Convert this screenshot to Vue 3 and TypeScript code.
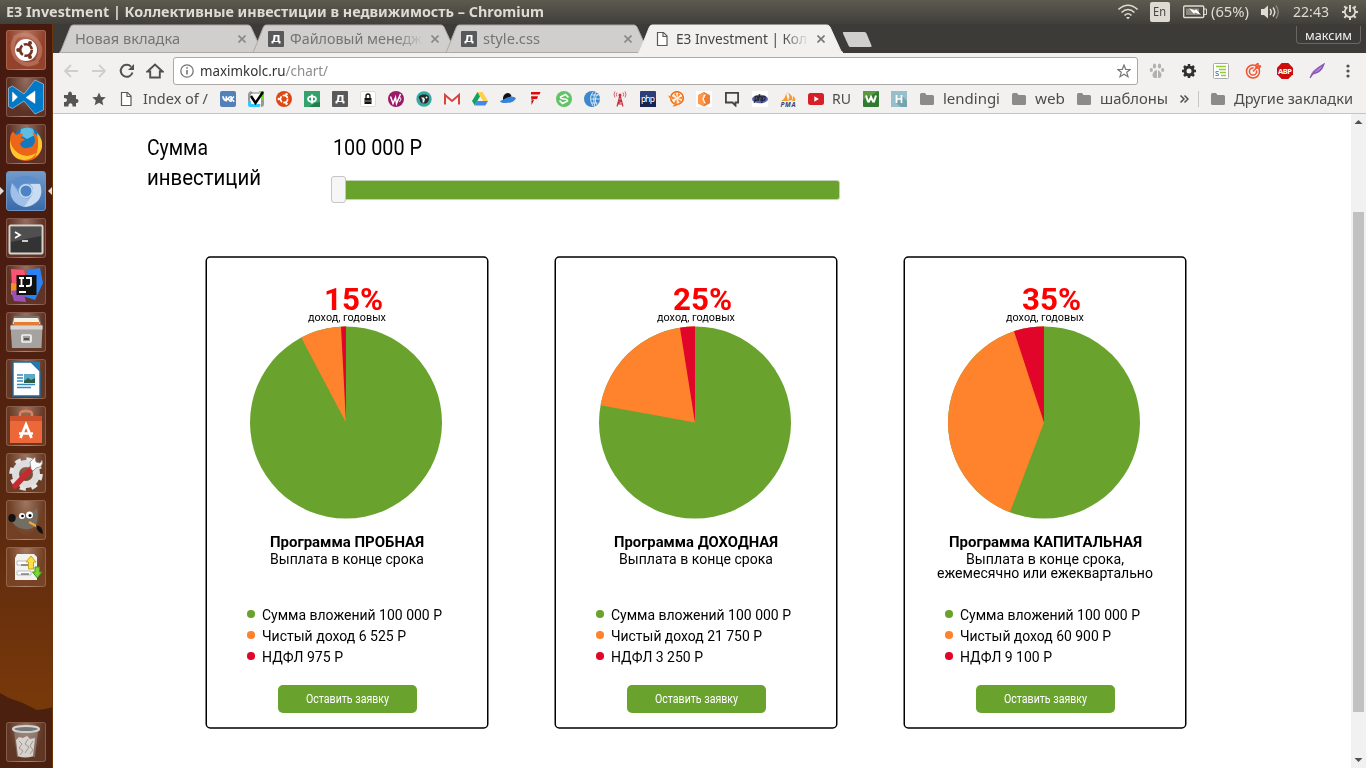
<script setup lang="ts">
import type { Directive } from 'vue'

// Scales a line of text horizontally so that it takes the given width.
const vFit: Directive<HTMLElement, number> = {
  mounted(el, { value }) {
    const natural = el.getBoundingClientRect().width
    el.style.transform = `scaleX(${value / natural})`
    el.style.marginRight = `${value - natural}px`
  },
}

interface Row { color: string; text: string; width: number }
interface Program {
  rate: string
  name: string
  nameWidth: number
  terms: { text: string; width: number }[]
  orange: number
  red: number
  rows: Row[]
}

const GREEN = '#69a22d'
const ORANGE = '#ff822c'
const RED = '#e1052a'

const programs: Program[] = [
  {
    rate: '15%', name: 'Программа ПРОБНАЯ', nameWidth: 154,
    terms: [{ text: 'Выплата в конце срока', width: 154 }],
    orange: 27.8, red: 3,
    rows: [
      { color: GREEN, text: 'Сумма вложений 100 000 Р', width: 180 },
      { color: ORANGE, text: 'Чистый доход 6 525 Р', width: 144 },
      { color: RED, text: 'НДФЛ 975 Р', width: 81 },
    ],
  },
  {
    rate: '25%', name: 'Программа ДОХОДНАЯ', nameWidth: 164,
    terms: [{ text: 'Выплата в конце срока', width: 154 }],
    orange: 79.6, red: 9,
    rows: [
      { color: GREEN, text: 'Сумма вложений 100 000 Р', width: 180 },
      { color: ORANGE, text: 'Чистый доход 21 750 Р', width: 151 },
      { color: RED, text: 'НДФЛ 3 250 Р', width: 92 },
    ],
  },
  {
    rate: '35%', name: 'Программа КАПИТАЛЬНАЯ', nameWidth: 193,
    terms: [{ text: 'Выплата в конце срока,', width: 158 }, { text: 'ежемесячно или ежеквартально', width: 216 }],
    orange: 159.2, red: 18.2,
    rows: [
      { color: GREEN, text: 'Сумма вложений 100 000 Р', width: 180 },
      { color: ORANGE, text: 'Чистый доход 60 900 Р', width: 151 },
      { color: RED, text: 'НДФЛ 9 100 Р', width: 92 },
    ],
  },
]

// Slice that starts at the given angle (counter-clockwise from the top) and ends at the top.
function slice(deg: number): string {
  const a = (deg * Math.PI) / 180
  const x = 96 - 96 * Math.sin(a)
  const y = 96 - 96 * Math.cos(a)
  return `M96 96L${x.toFixed(2)} ${y.toFixed(2)}A96 96 0 0 1 96 0Z`
}

const page = '<path d="M3.5 1.5h6l3.5 3.5v9.5h-9.500z" fill="#fff" stroke="#5a5a5a" stroke-width="1.2"/><path d="M9 1.500v4h4" fill="none" stroke="#5a5a5a" stroke-width="1.2"/>'
const letterD = '<rect width="16" height="16" rx="1" fill="#58595b"/><path d="M5.500 4h6v6h1v2.500h-2V11h-5v1.500h-2V10h1q1-2 1-6zm2 1.500q0 3-.8 4.500h2.800V5.500z" fill="#fff"/>'

const tabs = [
  { icon: '', text: 'Новая вкладка', width: 105, active: false, fade: false },
  { icon: letterD, text: 'Файловый менедж', width: 132, active: false, fade: true },
  { icon: letterD, text: 'style.css', width: 57, active: false, fade: false },
  { icon: page, text: 'E3 Investment | Кол', width: 131, active: true, fade: true },
]

const bookmarkIcons: string[] = [
  '<rect width="16" height="16" rx="2" fill="#5181b8"/><path d="M2 5.200h1.800Q4.300 7.500 5.500 8.200V5.200H7.200V7.200Q8.300 6.800 9 5.200h1.600Q10 7 9 7.800q1.300.8 2 2.700H9.200Q8.600 9 7.200 8.700v1.800Q3 10.800 2 5.200z" fill="#fff"/><path d="M11 5v6M14 5.500L11.500 8l2.700 2.700" fill="none" stroke="#fff" stroke-width="1.500"/>',
  '<path d="M4 1H11V4H4z" fill="#bbb"/><path d="M0 4q0-3 3-4l2 2-3 3v6H0z" fill="#999"/><path d="M11 0h5v9h-3z" fill="#62e523"/><path d="M0 10h3l4 3h5v3H2q-2 0-2-2z" fill="#35c7ff"/><path d="M12 9h4v4q0 3-3 3z" fill="#999"/><rect x="3" y="3" width="10" height="10" fill="#fff"/><path d="M3 5l4.500 7L15 1" fill="none" stroke="#000" stroke-width="2.400"/>',
  '<circle cx="8" cy="8" r="8" fill="#dd4814"/><circle cx="8" cy="8" r="3.600" fill="none" stroke="#fff" stroke-width="1.700" stroke-dasharray="6.300 1.240"/><g fill="#fff"><circle cx="2.800" cy="8" r="1.200"/><circle cx="10.500" cy="3.300" r="1.200"/><circle cx="10.500" cy="12.700" r="1.200"/></g>',
  '<rect width="16" height="16" fill="#34a36b"/><path d="M11 12l5-1v5H5z" fill="#227d4e"/><ellipse cx="8" cy="8" rx="4" ry="2.700" fill="none" stroke="#fff" stroke-width="1.800"/><path d="M8 3.500v9" stroke="#fff" stroke-width="2"/>',
  letterD,
  '<rect x=".5" y=".5" width="15" height="15" rx="1.500" fill="#fff" stroke="#ddd"/><rect x="4.500" y="7" width="7" height="6" fill="#111"/><path d="M6 7V5q0-2 2-2t2 2v2" fill="none" stroke="#111" stroke-width="1.300"/><path d="M5 10h6" stroke="#999"/>',
  '<circle cx="8" cy="8" r="8" fill="#991b68"/><path d="M2.500 5.500L5 12.500 7.500 6.500 8.500 12.500 12.500 3" fill="none" stroke="#fff" stroke-width="1.500"/><path d="M11 7q2-1 2 1l-1.500 3" fill="none" stroke="#fff"/>',
  '<circle cx="8" cy="8" r="7.700" fill="#35aaa5"/><path d="M2.500 6Q4 3 8 3.500 13 3 13 7t-3 5.500Q4 13 4 9z" fill="#282828"/><path d="M5 6.500h3l1 2-1 3H6.500V8.500z" fill="#e8f3f3"/><circle cx="10.500" cy="6.500" r="1" fill="#fff"/>',
  '<rect y="2.500" width="16" height="11" rx="1" fill="#f5f5f5"/><path d="M1 13.500V4l7 6 7-6v9.500" fill="none" stroke="#d9453c" stroke-width="2"/>',
  '<path d="M5.500 1h5l5.500 9h-5z" fill="#ffcf48"/><path d="M5.500 1L8 5.500 2.700 14.500 0 10z" fill="#13a160"/><path d="M5.300 10H16l-2.700 4.500H2.700z" fill="#4589e8"/>',
  '<path d="M3 6.500q1-4 4.500-4.500 3 0 4 3l-3 4H3z" fill="#111"/><path d="M0 10q3-1 6-3 6-3 10 0-2 5-10 5-5 .5-6-2z" fill="#3983d7"/>',
  '<path d="M3 1h9.500l-1 2.600H3zM3 5.300h7L9 8H6.500l-3 1z" fill="#d80b0b"/><path d="M3.500 9.500L6 9l-2.500 5z" fill="#a70000"/>',
  '<circle cx="8" cy="8" r="8" fill="#5fc465"/><path d="M12.500 6.500L9.500 3.500 4.500 6Q4.500 8 8 8t3.500 2L6.500 12.500l-3-3" fill="none" stroke="#fff" stroke-width="1.600"/>',
  '<circle cx="8" cy="8" r="8" fill="#3d88ca"/><path d="M9 1q-5 6 0 14M14 3Q9 8 13 14M7.500 4h7M7 8h9M7.500 12h6M12 1q-4 6-1 15" fill="none" stroke="#e8f2fa" stroke-width=".9"/>',
  '<path d="M8 4L5 15.500M8 4l3 11.500M6.500 10h3M5.500 13h5M6.500 8l3 2-4 3" fill="none" stroke="#c82c3b" stroke-width="1.100"/><circle cx="8" cy="4" r="1.500" fill="#c82c3b"/><path d="M5 1.500Q3.500 3.500 5 5.500M11 1.500q1.500 2 0 4M3 .5Q1 3.500 3 6.500M13 .5q2 3 0 6" fill="none" stroke="#d4606b"/>',
  '<rect width="16" height="16" rx="1" fill="#2b3f7a"/><path d="M0 9Q8 6 16 8v8H0z" fill="#162451"/><text x="8" y="11" text-anchor="middle" textLength="14" font-size="8.500" fill="#fff">php</text>',
  '<circle cx="9" cy="7" r="6.300" fill="#fff5ec" stroke="#f26b10" stroke-width="1.500"/><path d="M9 7L6 3l2-1zM9.500 6.500l.5-4.500 2.500 1.500zM10 7.300l4.500-2v3zM9.500 8l4 2-2 2zM8.500 8l.5 4.500-3-1zM8 7l-4-1.500v3z" fill="#f7852f"/><path d="M0 4.500l4.500 1-2 3z M4.500 15.500l2.500-3.500 2.500 3z" fill="#f7852f"/>',
  '<rect width="16" height="16" fill="#fff"/><path d="M8 1l6 3.200v8L8 15.500l-6-3.300v-8z" fill="#f17b2e"/><path d="M8 1v14.500l-6-3.300v-8z" fill="#ff974a"/><path d="M9.500 4Q8 4 8 6L7 8l1 2q0 2 1.500 2" fill="none" stroke="#fff" stroke-width="1.300"/>',
  '<path d="M1.900 1.900h12.200v9.600h-2.600v3L8.500 11.500H1.900z" fill="none" stroke="#444" stroke-width="1.800"/>',
  '<rect width="16" height="16" fill="#fff"/><ellipse cx="8" cy="8" rx="8" ry="4.300" fill="#5b67a7"/><text x="8" y="10.300" text-anchor="middle" textLength="12" font-size="8" font-weight="bold" font-style="italic" fill="#1c1f37">php</text>',
  '<path d="M1 10Q6 7 6 2l2 8zM8 10Q11 4 7 1q7 4 5 8zM12 10q2-3 1-5 3 2 2 5z" fill="#f69b2d"/><text x="8" y="15.500" text-anchor="middle" textLength="15" font-size="6.500" font-weight="bold" font-style="italic" fill="#344278">PMA</text>',
  '<rect y="2" width="16" height="12" rx="2.500" fill="#d61f26"/><path d="M6.300 5.300v5.400L10.800 8z" fill="#fff"/>',
]
const wIcon = '<rect width="16" height="16" rx="1" fill="#307b30"/><path d="M0 0h16L0 9z" fill="#5c983f"/><path d="M3 4.500l2 6h1L8 6l2 4.500h1l2-6" fill="none" stroke="#fff" stroke-width="2"/>'
const hIcon = '<rect width="16" height="16" fill="#96bfcc"/><path d="M11 5l5 5v6H10l-5-4z" fill="#76a1ae"/><path d="M5.500 4v8M10.500 4v8M5.500 8h5" stroke="#fff" stroke-width="1.700"/>'
const folders = [
  { text: 'lendingi', width: 57 },
  { text: 'web', width: 30 },
  { text: 'шаблоны', width: 68 },
]

const extensions: string[] = [
  '<g fill="#b2b2b2"><ellipse cx="5.500" cy="3" rx="1.700" ry="2.500"/><ellipse cx="10.500" cy="3" rx="1.700" ry="2.500"/><ellipse cx="2.300" cy="7" rx="1.600" ry="2.100"/><ellipse cx="13.700" cy="7" rx="1.600" ry="2.100"/><path d="M8 7q3 0 4.500 4.500 0 3.500-2.500 3.500H6Q3.500 15 3.500 11.500 5 7 8 7z"/></g><path d="M8.500 7v8" stroke="#f2f1f0"/>',
  '<circle cx="8" cy="8" r="4" fill="none" stroke="#303030" stroke-width="3"/><path d="M8 1v3M8 12v3M1 8h3M12 8h3M3 3l2 2M11 11l2 2M3 13l2-2M11 5l2-2" stroke="#303030" stroke-width="2.500"/>',
  '<rect x=".5" y=".5" width="15" height="15" rx="1" fill="#fff" stroke="#aaa"/><path d="M3 3.500h10M6 6.500h7M7 9.500h6M8 12.500h5" stroke="#94c83d" stroke-width="1.400"/><text x="2" y="12.500" font-size="7.500" fill="#444">S</text>',
  '<g fill="none" stroke="#f2512d"><circle cx="8" cy="8.500" r="6.500" stroke-width="1.500"/><circle cx="8" cy="8.500" r="3.600" stroke-width="1.500"/><path d="M8 8.500L14 2" stroke="#f2f1f0" stroke-width="3.500"/><path d="M8 8.500L14 2M11 5V2l2-2v3h3l-2 2z" stroke-width="1.400"/></g>',
  '<path d="M4.700 0h6.600L16 4.700v6.600L11.300 16H4.700L0 11.300V4.700z" fill="#cb0d0d"/><text x="8" y="10.800" text-anchor="middle" textLength="14" font-size="7.500" font-weight="bold" fill="#fff">ABP</text>',
  '<path d="M1 15Q1 7 15 1q-1 8-8 9.500-3 .5-6 4.500z" fill="#b48ad7"/><path d="M1 15Q5 7 15 1 12 9 5 10.500" fill="none" stroke="#8453ae" stroke-width="1.200"/>',
]

const launcher: { tint: string; art: string }[] = [
  { tint: 'dash', art: '<path d="M8 8q12-8 22 2 8 10 1 20M32 31q-12 8-22-3-7-12 0-21" fill="none" stroke="#d69a86" stroke-width="4" opacity=".45"/><circle cx="20" cy="20" r="11" fill="#fff"/><circle cx="20" cy="20" r="5.800" fill="none" stroke="#713420" stroke-width="2.600" stroke-dasharray="10.500 1.650"/><g fill="#713420"><circle cx="12.200" cy="20" r="2"/><circle cx="24" cy="13" r="2"/><circle cx="24" cy="27" r="2"/></g>' },
  { tint: 'plain', art: '<path d="M2.500 11l4-2L18 17 29 3l8.500 4v26L29 37 18 24 6.500 31.500l-4-2zM6.500 15v10l5-5zM29 14l-9 6.500 9 6z" fill="#0079c8" fill-rule="evenodd" stroke="#b8c8d8" stroke-width=".7"/><path d="M6.500 15v10l5-5zM29 14l-9 6.500 9 6z" fill="#fff"/>' },
  { tint: 'plain', art: '<circle cx="21" cy="18" r="14.500" fill="#1577bb"/><path d="M15 5q7-3 12 0l2 6-8 4-7-4z" fill="#5fbde2"/><path d="M4 16Q4 10 7 7.500L10 11q4-2 7-1l-2 4q3 0 4 2-4 1-5 4 2 5 7 4 8-1 8-8-1-6-3-8 10 5 10 14-2 14-16 15Q4 36 4 20z" fill="#ed6519"/><path d="M4 16q1 8 8 13 9 6 18 0-3 7-12 7Q5 35 4 21zM31 9q6 6 5 14-1 6-7 10 5-9 2-24z" fill="#ffc52d"/>' },
  { tint: 'chromium', art: '<circle cx="20" cy="20" r="15.500" fill="#76a4d6"/><path d="M20 4.500q10 0 14 8H20q-6 0-8 6l-6-7q5-7 14-7z" fill="#5b8dca"/><path d="M6 12l8 12q5 6 11 2l-7 10Q4 32 4.500 19z" fill="#9fc0e8"/><path d="M34 13q4 13-5 19-5 4-11 4l8-12q3-6-2-11z" fill="#c9dcf1"/><circle cx="20" cy="20" r="7" fill="#c9dcf1"/><circle cx="20" cy="20" r="5.500" fill="#4c83c4"/>' },
  { tint: 'plain', art: '<rect x="3.500" y="7.500" width="33" height="28" rx="1" fill="#333" stroke="#d5d5d0" stroke-width="2"/><path d="M5 9h30v9L5 24z" fill="#666" opacity=".55"/><path d="M9 14l5 3-5 3M16 23h6" fill="none" stroke="#fff" stroke-width="1.700"/>' },
  { tint: 'plain', art: '<path d="M5 4l13 1 3 12-15 4z" fill="#fc5375"/><path d="M5 18l10 1-1 16-9-6z" fill="#f38d28"/><path d="M22 5l12-2 3 15-8 17-12-4z" fill="#2a82f5"/><path d="M5 26l12-2 3 13-12-1z" fill="#9b52b5"/><rect x="10.500" y="10" width="20" height="20" fill="#111"/><path d="M13 13h5M15.500 13v8M13 21h5M20 13h5v6q0 2-3 2h-2M13 27h7" fill="none" stroke="#fff" stroke-width="1.800"/>' },
  { tint: 'plain', art: '<path d="M8 4h25l3 10H5z" fill="#77736d"/><path d="M7 12l1-6h24l2 6z" fill="#f6f0e5"/><path d="M8 14v-4h25v4z" fill="#e37d35"/><path d="M4.500 13.500h32l-1 22.500H6z" fill="#a5a39f"/><path d="M4.500 13.500h32v4h-32z" fill="#d7d6d3"/><rect x="16" y="23" width="9" height="7" rx="1" fill="none" stroke="#f4f4f2" stroke-width="1.700"/><path d="M18 27h5" stroke="#555" stroke-width="2"/>' },
  { tint: 'plain', art: '<path d="M7 3h18l9 9v25H7z" fill="#fff" stroke="#1c6b9e" stroke-width="1.400"/><path d="M25 3h9v9z" fill="#217cb2"/><rect x="18" y="15" width="11" height="9" fill="#59aac7"/><path d="M18 22l4-3 3 2 4-2v5H18z" fill="#305d45"/><path d="M11 16h6M11 19h6M11 22h6M11 25.500h18M11 28.500h14" stroke="#368abb" stroke-width="1.600"/>' },
  { tint: 'plain', art: '<path d="M14 12V8q0-3 6-3t6 3v4" fill="none" stroke="#d9845f" stroke-width="2.500"/><path d="M4 10h32v27H4z" fill="#ed6838"/><path d="M4 10h32v5H4z" fill="#c9512d"/><path d="M14.500 32L20 18.500 25.500 32M13 27.500h14" fill="none" stroke="#fff" stroke-width="2.700"/>' },
  { tint: 'plain', art: '<circle cx="20" cy="21" r="10.500" fill="none" stroke="#ddd" stroke-width="7"/><circle cx="20" cy="21" r="14.800" fill="none" stroke="#e4e4e4" stroke-width="4" stroke-dasharray="6 5.620"/><path d="M26 15L9 33" stroke="#c6292f" stroke-width="5.500" stroke-linecap="round"/><path d="M25 16l-1-7 5-5 1 5 4 1 2-3q2 7-6 8l-3 3z" fill="#fafafa" stroke="#888" stroke-width=".8"/>' },
  { tint: 'plain', art: '<path d="M5 19q6 0 8-5 3-2 6-1 8 1 12-6 2 13-1 18-3 5-12 4Q8 28 5 19z" fill="#746d62"/><circle cx="16" cy="16" r="3" fill="#fff"/><circle cx="23.500" cy="15" r="3.500" fill="#fff"/><circle cx="16.500" cy="16" r="1.300"/><circle cx="24" cy="15.500" r="1.500"/><ellipse cx="6" cy="18" rx="3.700" ry="4" fill="#111"/><path d="M23 22l9 5" stroke="#f6a43b" stroke-width="2.300"/><path d="M30 25q7 1 7 9-6-1-7-9z" fill="#111"/>' },
  { tint: 'plain', art: '<path d="M11 7h17l3 3v23H9V11z" fill="#f2f2f0"/><path d="M11 14h14v4H11zM11 24h14v4H11z" fill="#fff" stroke="#bbb"/><path d="M15 18h8M15 27h8" stroke="#444" stroke-width="1.200"/><path d="M25 9l5 6h-2.500v7h-5v-7H20z" fill="#ffdf46" stroke="#caa51e"/><path d="M29 20h4.500v5H36l-4.700 6-4.800-6H29z" fill="#7bd338" stroke="#409917"/>' },
]
const trash = '<ellipse cx="20" cy="7" rx="13" ry="3" fill="#777" stroke="#d5d5d1" stroke-width="2"/><path d="M8 9l3 26h18l3-26z" fill="#bbb" opacity=".38"/><path d="M10 18l3-3 4 1 4-2 3 3 5-1-2 18q-8 3-15 0z" fill="#e5e3df" opacity=".85"/><path d="M13 19l3 3-3 4 4 3-3 4M22 17l-3 5 4 3-4 6M27 19l-3 5 3 4-3 4" fill="none" stroke="#9c9892" stroke-width="1"/>'
</script>

<template>
  <div class="desktop">
    <header class="panel">
      <span v-fit="538" class="fit panel-title">E3 Investment | Коллективные инвестиции в недвижимость – Chromium</span>
      <div class="indicators">
        <svg width="20" height="16" viewBox="0 0 20 16" fill="none" stroke="#dfdbd2" stroke-width="1.600"><path d="M.5 5.500Q10-3 19.500 5.500M3.500 8.500q6.500-6 13 0M6.500 11.500q3.500-3.500 7 0" /><path d="M8 13h4l-2 2.500z" fill="#dfdbd2" stroke="none" /></svg>
        <span class="lang"><span v-fit="13" class="fit">En</span></span>
        <svg class="battery" width="24" height="14" viewBox="0 0 24 14"><rect x=".7" y="1" width="20" height="11.500" rx="1" fill="none" stroke="#dfdbd2" stroke-width="1.400" /><path d="M3 3.500h13v6.500H3z" fill="#8b8981" /><path d="M6 3.200l6 2.300 1-1.500 5 6-6-2.500-1 1.500z" fill="#fff" /><path d="M21 4h2.500v5.500H21" fill="none" stroke="#dfdbd2" /></svg>
        <span v-fit="38" class="fit charge">(65%)</span>
        <svg class="volume" width="20" height="16" viewBox="0 0 20 16"><path d="M1 5h3l4-3.500v13L4 11H1z" fill="#dfdbd2" /><path d="M10 5q2.500 3 0 6M13 3.500q3.500 4.500 0 9" fill="none" stroke="#dfdbd2" stroke-width="1.500" /><path d="M16 1.500q4.500 6.500 0 13" fill="none" stroke="#86837b" stroke-width="1.500" /></svg>
        <span v-fit="36" class="fit clock">22:43</span>
        <svg class="gear" width="16" height="16" viewBox="0 0 16 16" fill="none" stroke="#dfdbd2"><path d="M5.500 3.300a5.200 5.200 0 1 0 5 0" stroke-width="1.800" /><path d="M8 1v7" stroke-width="2" /><path d="M0 8h3M13 8h3M8 13v3M2.300 2.300l2 2M13.700 2.300l-2 2M2.300 13.700l2-2M13.700 13.700l-2-2" stroke-width="2" /></svg>
      </div>
    </header>

    <div class="workspace">
      <nav class="launcher">
        <svg class="wallpaper" width="53" height="744" viewBox="0 0 53 744"><path d="M0 669l9 5 14 5 14 7 8-1 8-2v61H0z" fill="#4b200f" /><path d="M52.500 0v744" stroke="#6d350b" /></svg>
        <div v-for="(item, i) in launcher" :key="i" class="tile" :class="item.tint">
          <svg width="40" height="40" viewBox="0 0 40 40" v-html="item.art" />
          <template v-if="item.tint === 'chromium'"><i class="running" /><i class="focused" /></template>
        </div>
        <div class="tile plain trash"><svg width="40" height="40" viewBox="0 0 40 40" v-html="trash" /></div>
      </nav>

      <main class="browser">
        <div class="tabstrip">
          <div v-for="tab in tabs" :key="tab.text" class="tab" :class="{ active: tab.active }">
            <svg class="tab-shape" width="206" height="29" viewBox="0 0 206 29"><path d="M.5 28.500Q2 27 3 24L11 4Q12 1 14 1H189Q191 1 192 3L202 25Q203 28 205 28.500z" :fill="tab.active ? '#f2f1f0' : '#d0cfce'" :stroke="tab.active ? '#f2f1f0' : '#aaa9a7'" /></svg>
            <svg v-if="tab.icon" class="favicon" width="16" height="16" viewBox="0 0 16 16" v-html="tab.icon" />
            <span class="tab-label" :class="{ fade: tab.fade }"><span v-fit="tab.width" class="fit">{{ tab.text }}</span></span>
            <svg class="close" width="8" height="8" viewBox="0 0 8 8"><path d="M.5.5l7 7M7.500.5l-7 7" :stroke="tab.active ? '#777' : '#888'" stroke-width="1.600" /></svg>
          </div>
          <svg class="new-tab" width="34" height="17" viewBox="0 0 34 17"><path d="M2.500 1h21q1.500 0 2 1.500l5 12q.5 1.500-1 1.500h-20q-1.500 0-2-1.500l-5.500-12q-.5-1.500.5-1.500z" fill="#d0cfce" /></svg>
          <span class="user"><span v-fit="47" class="fit">максим</span></span>
        </div>

        <div class="toolbar">
          <svg class="arrow" width="16" height="16" viewBox="0 0 16 16"><path d="M15 8H2M8 2L2 8l6 6" /></svg>
          <svg class="arrow" width="16" height="16" viewBox="0 0 16 16"><path d="M1 8h13M8 2l6 6-6 6" /></svg>
          <svg width="16" height="16" viewBox="0 0 16 16"><path d="M13.500 9.500A6 6 0 1 1 12 3.600" fill="none" stroke="#505050" stroke-width="2" /><path d="M15 1v6H9z" fill="#505050" /></svg>
          <svg width="18" height="16" viewBox="0 0 18 16"><path d="M1.500 8.500L9 1.500l7.500 7h-2.700v6H4.200v-6z" fill="none" stroke="#505050" stroke-width="1.900" /></svg>
          <div class="address">
            <svg width="14" height="14" viewBox="0 0 14 14" fill="none" stroke="#757575"><circle cx="7" cy="7" r="6.200" stroke-width="1.300" /><path d="M7 6v4.500M7 3.200v1.600" stroke-width="1.600" /></svg>
            <span v-fit="128" class="fit url"><b>maximkolc.ru</b>/chart/</span>
            <svg class="star" width="14" height="14" viewBox="0 0 14 14"><path d="M7 1l1.700 4.300 4.500.2-3.500 2.800 1.300 4.400L7 10.200l-4 2.500 1.300-4.400L.8 5.500l4.500-.2z" fill="none" stroke="#777" stroke-width="1.200" /></svg>
          </div>
          <div class="extensions">
            <svg v-for="(icon, i) in extensions" :key="i" width="16" height="16" viewBox="0 0 16 16" v-html="icon" />
          </div>
          <svg class="menu" width="4" height="14" viewBox="0 0 4 14" fill="#505050"><circle cx="2" cy="2" r="1.600" /><circle cx="2" cy="7" r="1.600" /><circle cx="2" cy="12" r="1.600" /></svg>
        </div>

        <div class="bookmarks">
          <svg class="puzzle" width="16" height="16" viewBox="0 0 16 16"><path d="M1 4h4V3q0-2.500 2-2.500T9 3v1h4v4h.700Q15.500 8 15.500 10t-1.800 2H13v3.500H9.500V14q-.2-1.800-2-1.800T5.500 14v1.500H1V11q3 0 3-2T1 7z" fill="#555" /></svg>
          <svg class="bar-star" width="14" height="14" viewBox="0 0 14 14"><path d="M7 .5l2 4.400 4.800.4-3.600 3.200 1.100 4.800L7 10.800l-4.300 2.500 1.100-4.800L.2 5.300 5 4.900z" fill="#555" /></svg>
          <svg class="bar-page" width="16" height="16" viewBox="0 0 16 16" v-html="page" />
          <span v-fit="65" class="fit index">Index of /</span>
          <svg v-for="(icon, i) in bookmarkIcons" :key="i" class="site" width="16" height="16" viewBox="0 0 16 16" v-html="icon" />
          <span v-fit="19" class="fit ru">RU</span>
          <svg class="site" width="16" height="16" viewBox="0 0 16 16" v-html="wIcon" />
          <svg class="site" width="16" height="16" viewBox="0 0 16 16" v-html="hIcon" />
          <span v-for="folder in folders" :key="folder.text" class="folder">
            <svg width="14" height="12" viewBox="0 0 14 12"><path d="M0 1.500Q0 0 1.500 0H5l1.500 2h6Q14 2 14 3.500v7q0 1.500-1.500 1.500h-11Q0 12 0 10.500z" fill="#8b8b8b" /></svg>
            <span v-fit="folder.width" class="fit">{{ folder.text }}</span>
          </span>
          <svg class="more" width="9" height="8" viewBox="0 0 9 8"><path d="M.5.5L4 4 .5 7.500M4.500.5L8 4 4.500 7.500" fill="none" stroke="#505050" stroke-width="1.500" /></svg>
          <i class="divider" />
          <span class="folder other">
            <svg width="14" height="12" viewBox="0 0 14 12"><path d="M0 1.500Q0 0 1.500 0H5l1.500 2h6Q14 2 14 3.500v7q0 1.500-1.500 1.500h-11Q0 12 0 10.500z" fill="#8b8b8b" /></svg>
            <span v-fit="119" class="fit">Другие закладки</span>
          </span>
        </div>

        <div class="viewport">
          <section class="content">
            <div class="amount">
              <div class="amount-label">
                <span v-fit="61" class="fit">Сумма</span>
                <span v-fit="114" class="fit">инвестиций</span>
              </div>
              <div class="amount-control">
                <span v-fit="89" class="fit amount-value">100 000 Р</span>
                <div class="slider"><i class="handle" /></div>
              </div>
            </div>

            <div class="cards">
              <article v-for="program in programs" :key="program.name" class="card">
                <svg class="frame" width="284" height="473" viewBox="0 0 284 473"><rect x="1.250" y="1" width="281.500" height="471" rx="4" fill="none" stroke="#000" stroke-width="1.500" /></svg>
                <div class="rate"><span v-fit="59" class="fit">{{ program.rate }}</span></div>
                <div class="caption"><span v-fit="78" class="fit">доход, годовых</span></div>
                <svg class="pie" width="194" height="193" viewBox="-1 -.5 194 193">
                  <circle cx="96" cy="96" r="96" :fill="GREEN" />
                  <path :d="slice(program.orange)" :fill="ORANGE" />
                  <path :d="slice(program.red)" :fill="RED" />
                </svg>
                <h2><span v-fit="program.nameWidth" class="fit">{{ program.name }}</span></h2>
                <div class="terms">
                  <div v-for="line in program.terms" :key="line.text"><span v-fit="line.width" class="fit">{{ line.text }}</span></div>
                </div>
                <ul>
                  <li v-for="row in program.rows" :key="row.text">
                    <i class="dot" :style="{ background: row.color }" /><span v-fit="row.width" class="fit">{{ row.text }}</span>
                  </li>
                </ul>
                <button type="button"><span v-fit="83" class="fit">Оставить заявку</span></button>
              </article>
            </div>
          </section>
          <aside class="scrollbar">
            <svg width="14" height="16" viewBox="0 0 14 16"><path d="M3.500 10L7.500 6l4 4z" fill="#505050" /></svg>
            <i class="thumb" />
            <svg width="14" height="16" viewBox="0 0 14 16"><path d="M3.500 6l4 4 4-4z" fill="#505050" /></svg>
          </aside>
        </div>
      </main>
    </div>
  </div>
</template>

<style>
html, body { overflow: hidden; }
</style>

<style scoped>
* { box-sizing: border-box; }
svg { display: block; flex: none; }
i { display: block; }
.fit { display: inline-block; flex: none; white-space: nowrap; transform-origin: left center; }
.desktop { width: 1366px; height: 768px; display: flex; flex-direction: column; overflow: hidden; font-family: "Noto Sans", "Open Sans", sans-serif; color: #4c4c4c; }

.panel { height: 24px; flex: none; display: flex; align-items: center; justify-content: space-between; padding: 0 8px 0 6px; background: linear-gradient(#5d5a50, #403f3a); color: #dfdbd2; font-size: 14px; line-height: 24px; }
.panel-title { font-weight: bold; }
.indicators { display: flex; align-items: center; }
.lang { width: 20px; height: 20px; margin-left: 12px; padding-left: 3px; border-radius: 2px; background: #dfdbd2; color: #45443f; font-size: 13px; line-height: 19px; }
.battery { margin-left: 13px; }
.charge { margin-left: 4px; }
.volume { margin-left: 11px; }
.clock { margin-left: 13px; }
.gear { margin-left: 13px; }

.workspace { flex: 1; display: flex; min-height: 0; }
.launcher { position: relative; width: 53px; flex: none; display: flex; flex-direction: column; gap: 7px; padding: 6px 0 6px 6px; background: linear-gradient(#471a0f, #4b1c10 35%, #57270f 62%, #69300d 78%, #78390a 91%); }
.wallpaper { position: absolute; left: 0; top: 0; }
.tile { position: relative; width: 40px; height: 40px; flex: none; border-radius: 3px; border: 1px solid rgba(235, 200, 180, .25); background: radial-gradient(ellipse at 50% 0, rgba(255, 230, 215, .42), rgba(255, 220, 200, .12) 65%); }
.tile svg { margin: -1px; }
.tile.dash { background: radial-gradient(ellipse at 50% 0, #ba7764, #93432b 65%); }
.tile.chromium { background: linear-gradient(#729aca, #396ba9); border-color: #6c93c1; }
.running, .focused { position: absolute; top: 15px; border: 4px solid transparent; }
.running { left: -7px; border-left-color: #ddd; border-right: 0; }
.focused { right: -7px; border-right-color: #ddd; border-left: 0; }
.trash { margin-top: auto; }

.browser { flex: 1; min-width: 0; display: flex; flex-direction: column; background: #f2f1f0; }
.tabstrip { height: 29px; flex: none; display: flex; background: #3c3b37; padding-left: 6px; }
.tab { position: relative; width: 206px; height: 29px; margin-right: -13px; display: flex; align-items: center; padding: 0 19px 0 16px; font-size: 14px; line-height: 29px; color: #747474; flex: none; }
.tab.active { z-index: 1; color: #444; }
.tab-shape { position: absolute; left: 0; top: 0; }
.favicon, .tab-label, .close { position: relative; }
.favicon { margin-right: 6px; }
.tab-label { flex: 1; overflow: hidden; height: 29px; }
.tab-label.fade { -webkit-mask-image: linear-gradient(90deg, #000 80%, transparent); mask-image: linear-gradient(90deg, #000 80%, transparent); }
.close { margin-left: 8px; }
.new-tab { margin: 7px 0 0 10px; }
.user { width: 65px; height: 18px; margin: 2px 5px 0 auto; padding-left: 8px; border: 1px solid #686762; border-top: 0; border-radius: 0 0 4px 4px; color: #eee; font-size: 12.5px; line-height: 19px; }

.toolbar { height: 36px; flex: none; display: flex; align-items: center; padding: 0 16px 0 10px; }
.toolbar > svg { margin-right: 12px; }
.arrow { fill: none; stroke: #cfcecd; stroke-width: 1.8; }
.toolbar > svg:nth-child(4) { margin: 0 9px 0 -1px; }
.address { width: 965px; height: 28px; flex: none; display: flex; align-items: center; padding: 0 6px; border: 1px solid #aaa9a7; border-radius: 3px; background: #fff; color: #8d8d8d; font-size: 14px; line-height: 26px; }
.url { margin-left: 6px; }
.url b { font-weight: normal; color: #333; }
.star { margin-left: auto; }
.extensions { display: flex; gap: 16px; margin-left: 11px; }
.toolbar > .menu { margin: 0 0 0 auto; }

.bookmarks { height: 25px; flex: none; display: flex; align-items: center; padding: 0 13px 4px 9px; border-bottom: 1px solid #c6c5c4; font-size: 14px; line-height: 20px; }
.bookmarks > .puzzle { margin-left: 1px; }
.bookmarks > .bar-star { margin-left: 13px; }
.bar-page { margin-left: 12px; }
.index { margin-left: 9px; }
.site { margin-left: 12px; }
.ru { margin-left: 8px; }
.folder { display: flex; align-items: center; gap: 9px; margin-left: 12px; }
.site + .folder { margin-left: 13px; }
.more { margin-left: 12px; }
.divider { width: 1px; height: 16px; margin-left: 9px; background: #c8c7c6; }
.folder.other { margin-left: 12px; }

.viewport { flex: 1; display: flex; min-height: 0; background: #fff; }
.content { flex: 1; padding: 19px 0 0 94px; font-family: Roboto, "Open Sans", sans-serif; color: #000; }
.amount { display: flex; font-size: 22px; line-height: 30px; height: 123px; }
.amount-label { width: 184px; display: flex; flex-direction: column; align-items: flex-start; }
.amount-control { width: 509px; }
.amount-value { display: block; width: max-content; margin-left: 2px; }
.slider { height: 20px; margin-top: 17px; border: 1px solid #c5d2b8; border-radius: 3px; background: #69a22d; }
.handle { position: relative; top: -5px; left: -1px; width: 15px; height: 27px; border: 1px solid #c5c5c5; border-radius: 3px; background: #f6f6f6; }
.cards { display: flex; gap: 65px; padding-left: 58px; }
.card { position: relative; width: 284px; height: 473px; flex: none; display: flex; flex-direction: column; align-items: center; padding-top: 32px; }
.frame { position: absolute; left: 0; top: 0; }
.rate { height: 24px; margin-left: 12px; font-size: 31px; font-weight: bold; line-height: 24px; color: #f00; }
.caption { height: 14px; margin-left: -1px; font-size: 11px; line-height: 12px; }
.pie { margin-left: -2px; }
h2 { height: 19px; margin: 14px 0 0; font-size: 15px; line-height: 18px; }
.terms { height: 28px; font-size: 14px; line-height: 14px; text-align: center; }
ul { align-self: flex-start; list-style: none; margin: 25px 0 0 42px; padding: 0; }
li { display: flex; align-items: center; height: 21px; font-size: 14px; line-height: 21px; }
.dot { width: 7.5px; height: 7.5px; margin: 0 7.5px 3px 0; border-radius: 50%; }
button { width: 139px; height: 28px; margin: 17px 0 0; padding: 1px 0 0; border: 0; border-radius: 5px; background: #69a22d; color: #fff; font: 12px/27px Roboto, sans-serif; }
.scrollbar { width: 15px; display: flex; flex-direction: column; background: #f1f1f1; }
.thumb { width: 11px; height: 500px; margin: 82px 0 auto 2px; background: #c1c1c1; }
</style>
